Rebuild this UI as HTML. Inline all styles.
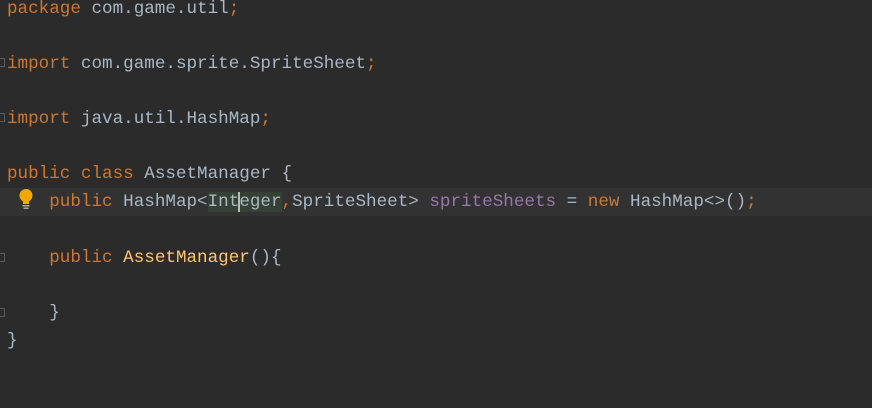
<!DOCTYPE html>
<html><head><style>
body{margin:0;width:872px;height:408px;background:#2b2b2b;overflow:hidden;position:relative;font-family:"Liberation Mono","DejaVu Sans Mono",monospace;font-size:17.6px;color:#a9b7c6}
.l{position:absolute;left:7px;height:27.5px;line-height:27.5px;white-space:pre}
.k{color:#cc7832}.f{color:#9876aa}.m{color:#ffc66d}
.cur{position:absolute;left:0;top:188px;width:872px;height:28px;background:#323232}
.hl{background:#344134}
.fold{position:absolute;left:0;width:5px;height:9px;border:1px solid #5a5a5a;border-left:none;box-sizing:border-box}
</style></head><body>
<div class="cur"></div>
<div class="l" style="top:-4px"><span class="k">package</span> com.game.util<span class="k">;</span></div>
<div class="l" style="top:51px"><span class="k">import</span> com.game.sprite.SpriteSheet<span class="k">;</span></div>
<div class="l" style="top:106px"><span class="k">import</span> java.util.HashMap<span class="k">;</span></div>
<div class="l" style="top:161px"><span class="k">public class</span> AssetManager {</div>
<div class="l" style="top:189px">    <span class="k">public</span> HashMap&lt;<span class="hl">Int<span style="border-left:2px solid #bbb;margin-left:-1px;margin-right:-1px"></span>eger</span><span class="k">,</span>SpriteSheet&gt; <span class="f">spriteSheets</span> = <span class="k">new</span> HashMap&lt;&gt;()<span class="k">;</span></div>
<div class="l" style="top:245px">    <span class="k">public</span> <span class="m">AssetManager</span>(){</div>
<div class="l" style="top:300px">    }</div>
<div class="l" style="top:328px">}</div>
<div class="fold" style="top:58px"></div>
<div class="fold" style="top:113px"></div>
<div class="fold" style="top:253px"></div>
<div class="fold" style="top:308px"></div>
<svg style="position:absolute;left:18px;top:188px" width="16" height="22" viewBox="0 0 16 22"><circle cx="8" cy="7.5" r="6.5" fill="#f2a800"/><rect x="5" y="12" width="6" height="4" fill="#f2a800"/><rect x="4.5" y="17" width="7" height="1.5" fill="#aaa"/><rect x="5.5" y="19.5" width="5" height="1.5" fill="#aaa"/></svg>
</body></html>
